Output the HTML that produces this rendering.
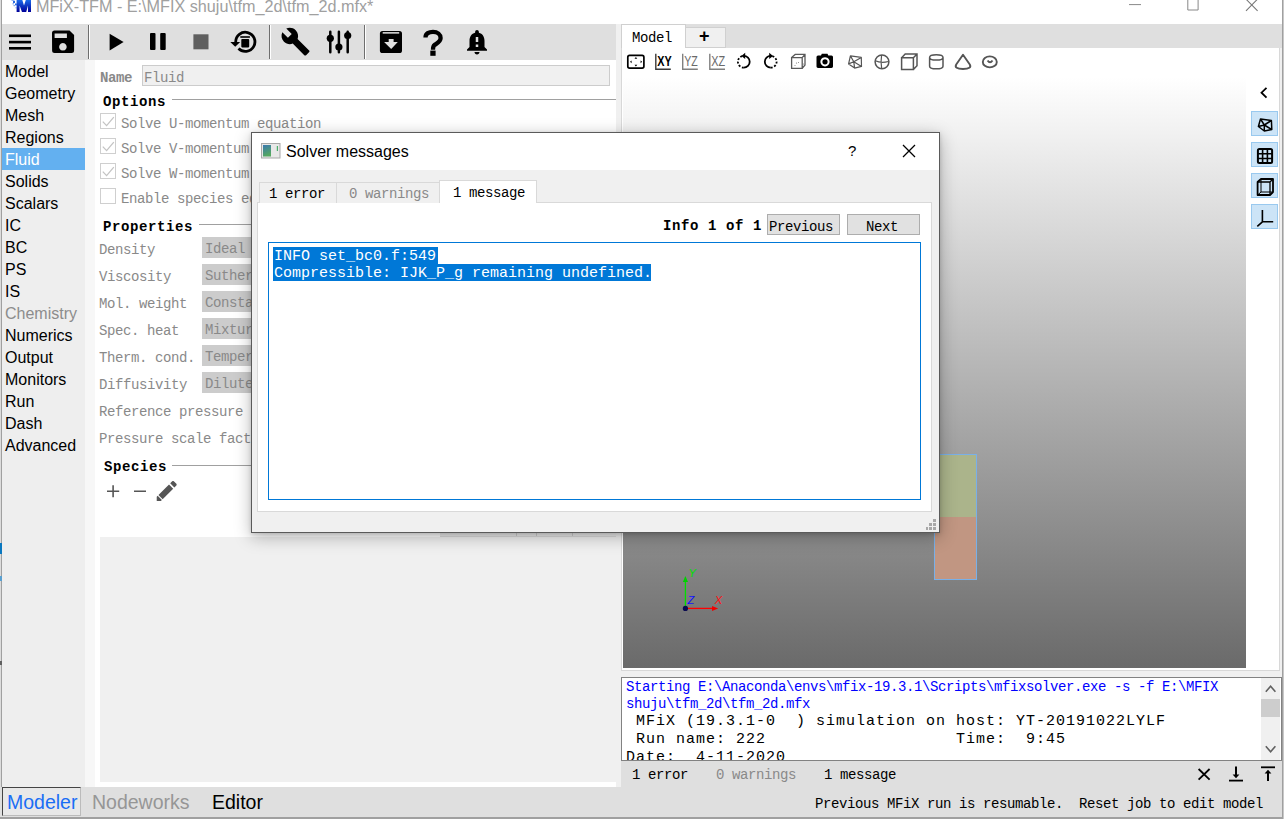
<!DOCTYPE html>
<html><head><meta charset="utf-8">
<style>
*{margin:0;padding:0;box-sizing:border-box}
html,body{width:1284px;height:819px;overflow:hidden;background:#f0f0f0;font-family:"Liberation Sans",sans-serif;position:relative}
.a{position:absolute}
.m{position:absolute;font-family:"Liberation Mono",monospace;font-size:14px;letter-spacing:-0.4px;white-space:pre;line-height:16px}
.s{position:absolute;font-family:"Liberation Sans",sans-serif;white-space:pre}
.b{font-weight:bold}
.nav{position:absolute;left:5px;margin-top:1px;font-size:16px;line-height:22px;color:#000;font-family:"Liberation Sans",sans-serif}
.lbl{color:#898989}
.cb{position:absolute;left:100px;width:16px;height:16px;border:1px solid #cfcfcf;background:#fff}
.combo{position:absolute;left:202px;width:60px;height:21px;background:#cccccc}
.vb{position:absolute;left:1251px;width:27px;height:25px;background:#cce4f7;border:1px solid #99c9ef}
</style></head><body>
<!-- title bar -->
<div class="a" style="left:0;top:0;width:1284px;height:24px;background:#fff"></div>
<div class="a" style="left:0;top:0;width:1px;height:819px;background:#dcdcdc"></div><div class="a" style="left:1px;top:0;width:1px;height:819px;background:#a0a0a0"></div><div class="a" style="left:0;top:543px;width:2px;height:11px;background:#0a78c0"></div><div class="a" style="left:0;top:576px;width:2px;height:5px;background:#5aa0d0"></div><div class="a" style="left:0;top:661px;width:2px;height:4px;background:#606060"></div>
<div class="s" style="left:36px;top:-6px;font-size:16.2px;line-height:24px;color:#a0a0a0">MFiX-TFM - E:\MFIX shuju\tfm_2d\tfm_2d.mfx*</div>
<svg class="a" style="left:0;top:0" width="34" height="14" viewBox="0 0 34 14"><defs><linearGradient id="mg" x1="0" y1="0" x2="0" y2="1"><stop offset="0" stop-color="#1a6ae8"/><stop offset="1" stop-color="#00009a"/></linearGradient></defs><path d="M16.6 0H22.3L24 5.5L25.8 0H31V11.9H28V5.5L26.2 11.9H22L19.6 5.5V11.9H16.6Z" fill="url(#mg)"/><g fill="#2a6ae0"><rect x="11.5" y="0" width="3" height="1" opacity="0.5"/><rect x="13" y="1" width="2" height="2"/><rect x="15" y="3.5" width="2" height="1.8"/><rect x="12.5" y="3" width="1.5" height="1.5" opacity="0.5"/><rect x="13.5" y="5" width="1.5" height="1.2" opacity="0.6"/><rect x="15.5" y="7" width="1.2" height="1.5" opacity="0.5"/></g></svg>
<svg class="a" style="left:1120px;top:0" width="164" height="14" viewBox="1120 0 164 14"><path d="M1129 4.6H1141" stroke="#888" stroke-width="1"/><path d="M1187.8 -1V10H1198.1V-1" stroke="#888" fill="none" stroke-width="1"/><path d="M1246.5 -0.3L1257.6 10.8M1257 -0.3L1246 10.8" stroke="#777" stroke-width="1.1"/></svg>

<!-- toolbar -->
<div class="a" style="left:2px;top:24px;width:614px;height:36px;background:#dfdfdf"></div>
<div class="a" style="left:88px;top:25px;width:1px;height:34px;background:#6e6e6e"></div><div class="a" style="left:89px;top:25px;width:1px;height:34px;background:#fff"></div>
<div class="a" style="left:269px;top:25px;width:1px;height:34px;background:#6e6e6e"></div><div class="a" style="left:270px;top:25px;width:1px;height:34px;background:#fff"></div>
<div class="a" style="left:364px;top:25px;width:1px;height:34px;background:#6e6e6e"></div><div class="a" style="left:365px;top:25px;width:1px;height:34px;background:#fff"></div>
<svg class="a" style="left:0;top:0" width="620" height="60" viewBox="0 0 620 60">
<g fill="#000">
<rect x="9" y="34.5" width="22" height="2.6"/><rect x="9" y="40.8" width="22" height="2.6"/><rect x="9" y="47" width="22" height="2.6"/>
<path fill-rule="evenodd" d="M52 33a2.5 2.5 0 0 1 2.5-2.5h15l4.6 4.6v15.5a2.5 2.5 0 0 1-2.5 2.5h-17a2.5 2.5 0 0 1-2.5-2.5zM54.6 33.6v4.5h12.3v-4.5zM62.9 43a3.8 3.8 0 1 0 0.01 0z"/>
<path d="M109.6 33.7L123.6 42L109.6 50.4z"/>
<rect x="150" y="33" width="5.5" height="17" rx="1"/><rect x="160.2" y="33" width="5.5" height="17" rx="1"/>
<rect x="193.4" y="34.3" width="15.1" height="15" fill="#5f5f5f"/>
<path d="M235.7 42A9.6 9.6 0 1 1 238.5 48.6" fill="none" stroke="#000" stroke-width="2.8"/>
<path d="M230.3 42H240.2L235.2 46.8z"/>
<rect x="240.3" y="36.2" width="9.6" height="1.6"/><rect x="241.3" y="39" width="7.9" height="8.4" rx="0.8"/>
<path transform="translate(280.3 26.35) scale(1.27)" d="M22.7 19l-9.1-9.1c.9-2.3.4-5-1.5-6.9-2-2-5-2.4-7.4-1.3L9 6 6 9 1.6 4.7C.4 7.1.9 10.1 2.9 12.1c1.9 1.9 4.6 2.4 6.9 1.5l9.1 9.1c.4.4 1 .4 1.4 0l2.3-2.3c.5-.4.5-1.1.1-1.4z"/>
<g stroke="#000" stroke-width="2.5" stroke-linecap="round"><path d="M330.3 31.8V52.2M338.9 31.8V52.2M347.7 31.8V52.2"/></g>
<circle cx="330.3" cy="38.3" r="3.6"/><circle cx="338.9" cy="47" r="3.6"/><circle cx="347.7" cy="35.5" r="3.6"/>
<rect x="379.9" y="30.9" width="22.1" height="22.1" rx="2.6"/>
<rect x="382.7" y="32" width="16.5" height="1.7" fill="#c8c8c8"/>
<path d="M388.7 39H393.6V42.1H397.8L391.2 49.1L384.1 42.1H388.7z" fill="#dfdfdf"/>
<path d="M425.5 37.5C425.5 33.5 429 31.8 433 31.8C437.5 31.8 440.6 34.5 440.6 38C440.6 42 436.5 43.5 434.5 45C433.2 46 433 47 433 49.7" fill="none" stroke="#000" stroke-width="4.3"/>
<rect x="430.3" y="50.6" width="5.3" height="5.2"/>
<path transform="translate(462 26.9) scale(1.25)" d="M18 16v-5c0-3.07-1.64-5.64-4.5-6.32V4c0-.83-.67-1.5-1.5-1.5s-1.5.67-1.5 1.5v.68C7.63 5.36 6 7.92 6 11v5l-2 2v1h16v-1l-2-2zm-5 0h-2v-2h2v2zm0-4h-2V8h2v4zm-1 10c1.1 0 2-.9 2-2h-4c0 1.1.89 2 2 2z"/>
</g>
</svg>
<div class="a" style="left:616px;top:24px;width:5px;height:763px;background:#f0f0f0"></div>

<!-- nav -->
<div class="a" style="left:2px;top:60px;width:83px;height:727px;background:#eeeeee"></div>
<div class="a" style="left:85px;top:60px;width:10px;height:727px;background:#f7f7f7"></div>
<div class="a" style="left:95px;top:60px;width:521px;height:727px;background:#fff"></div>
<div class="a" style="left:2px;top:148px;width:83px;height:22px;background:#63b0f0"></div>
<div class="nav" style="top:60px">Model</div>
<div class="nav" style="top:82px">Geometry</div>
<div class="nav" style="top:104px">Mesh</div>
<div class="nav" style="top:126px">Regions</div>
<div class="nav" style="top:148px;color:#fff">Fluid</div>
<div class="nav" style="top:170px">Solids</div>
<div class="nav" style="top:192px">Scalars</div>
<div class="nav" style="top:214px">IC</div>
<div class="nav" style="top:236px">BC</div>
<div class="nav" style="top:258px">PS</div>
<div class="nav" style="top:280px">IS</div>
<div class="nav" style="top:302px;color:#8c8c8c">Chemistry</div>
<div class="nav" style="top:324px">Numerics</div>
<div class="nav" style="top:346px">Output</div>
<div class="nav" style="top:368px">Monitors</div>
<div class="nav" style="top:390px">Run</div>
<div class="nav" style="top:412px">Dash</div>
<div class="nav" style="top:434px">Advanced</div>

<!-- content -->
<div class="m b lbl" style="left:100px;top:70px">Name</div>
<div class="a" style="left:142px;top:65px;width:468px;height:21px;background:#f0f0f0;border:1px solid #cccccc"></div>
<div class="m lbl" style="left:144px;top:70px">Fluid</div>
<div class="m b" style="left:103px;top:94px;letter-spacing:0.6px">Options</div>
<div class="a" style="left:172px;top:99px;width:444px;height:1px;background:#a0a0a0"></div>
<div class="cb" style="top:113px"></div>
<div class="cb" style="top:138px"></div>
<div class="cb" style="top:163px"></div>
<div class="cb" style="top:188px"></div>
<div class="m lbl" style="left:121px;top:116px">Solve U-momentum equation</div>
<div class="m lbl" style="left:121px;top:141px">Solve V-momentum equation</div>
<div class="m lbl" style="left:121px;top:166px">Solve W-momentum equation</div>
<div class="m lbl" style="left:121px;top:191px">Enable species equations</div>
<div class="m b" style="left:103px;top:219px;letter-spacing:0.6px">Properties</div>
<div class="a" style="left:199px;top:224px;width:417px;height:1px;background:#a0a0a0"></div>
<div class="combo" style="top:237px"></div>
<div class="combo" style="top:264px"></div>
<div class="combo" style="top:291px"></div>
<div class="combo" style="top:318px"></div>
<div class="combo" style="top:345px"></div>
<div class="combo" style="top:372px"></div>
<div class="m lbl" style="left:99px;top:242px">Density</div>
<div class="m lbl" style="left:99px;top:269px">Viscosity</div>
<div class="m lbl" style="left:99px;top:296px">Mol. weight</div>
<div class="m lbl" style="left:99px;top:323px">Spec. heat</div>
<div class="m lbl" style="left:99px;top:350px">Therm. cond.</div>
<div class="m lbl" style="left:99px;top:377px">Diffusivity</div>
<div class="m lbl" style="left:205px;top:241px">Ideal</div>
<div class="m lbl" style="left:205px;top:268px">Suther</div>
<div class="m lbl" style="left:205px;top:295px">Consta</div>
<div class="m lbl" style="left:205px;top:322px">Mixtur</div>
<div class="m lbl" style="left:205px;top:349px">Temper</div>
<div class="m lbl" style="left:205px;top:376px">Dilute</div>
<div class="m lbl" style="left:99px;top:404px">Reference pressure</div>
<div class="m lbl" style="left:99px;top:431px">Pressure scale factor</div>
<div class="m b" style="left:104px;top:459px;letter-spacing:0.6px">Species</div>
<div class="a" style="left:172px;top:465px;width:444px;height:1px;background:#a0a0a0"></div>
<svg class="a" style="left:0;top:100px" width="200" height="420" viewBox="0 100 200 420">
<g stroke="#c4c4c4" stroke-width="1.3" fill="none"><path d="M102.8 121.6L106.6 125.6L113.8 117.2M102.8 146.6L106.6 150.6L113.8 142.2M102.8 171.6L106.6 175.6L113.8 167.2"/></g>
<path d="M107 491.2H119.2M113.1 485.3V497.2M134 491.2H146" stroke="#555" stroke-width="1.6"/>
<path transform="translate(153.4 477.6) scale(1.11)" fill="#555" d="M3 17.25V21h3.75L17.81 9.94l-3.75-3.75L3 17.25zM20.71 7.04c.39-.39.39-1.02 0-1.41l-2.34-2.34c-.39-.39-1.02-.39-1.41 0l-1.83 1.83 3.75 3.75 1.83-1.83z"/><path transform="translate(153.4 477.6) scale(1.11)" d="M3.3 15.1L8.9 20.7" stroke="#fff" stroke-width="1"/>
</svg>
<div class="a" style="left:440px;top:515px;width:176px;height:22px;background:#ededed;border-bottom:1px solid #dcdcdc"></div><div class="a" style="left:516px;top:515px;width:1px;height:21px;background:#cfcfcf"></div><div class="a" style="left:536px;top:515px;width:1px;height:21px;background:#cfcfcf"></div><div class="a" style="left:572px;top:515px;width:1px;height:21px;background:#cfcfcf"></div>
<div class="a" style="left:100px;top:537px;width:516px;height:245px;background:#f0f0f0"></div>

<!-- right panel -->
<div class="a" style="left:621px;top:24px;width:661px;height:24px;background:#dfdfdf"></div>
<div class="a" style="left:621px;top:24px;width:65px;height:24px;background:#fff;border:1px solid #d0d0d0;border-bottom:none"></div>
<div class="a" style="left:686px;top:27px;width:40px;height:21px;background:#f0f0f0;border:1px solid #d0d0d0;border-left:none"></div>
<div class="m" style="left:632px;top:30px">Model</div>
<div class="s b" style="left:699px;top:26px;font-size:18px;line-height:20px">+</div>
<div class="a" style="left:621px;top:48px;width:659px;height:623px;background:#fff;border-left:1px solid #d8d8d8;border-right:1px solid #d8d8d8;border-bottom:1px solid #d8d8d8"></div>
<div class="a" style="left:623px;top:77px;width:623px;height:591px;background:linear-gradient(#ffffff,#6a6a6a)"></div>
<div class="a" style="left:934px;top:454px;width:43px;height:126px;border:1px solid #79b0e8"></div>
<div class="a" style="left:935px;top:455px;width:41px;height:62px;background:#abb48b"></div>
<div class="a" style="left:935px;top:517px;width:41px;height:62px;background:#c19682"></div>
<svg class="a" style="left:660px;top:560px" width="80" height="60" viewBox="660 560 80 60">
<path d="M685.4 608.4V581" stroke="#00e000" stroke-width="1.3"/>
<path d="M682.8 582L685.4 576L688 582z" fill="#00d000"/>
<path d="M685.4 608.4H712.5" stroke="#ff0000" stroke-width="1.3"/>
<path d="M712 605.9L718.2 608.4L712 610.9z" fill="#f00000"/>
<circle cx="685.4" cy="608.4" r="2.6" fill="#0a0a50"/>
<text x="688.6" y="577" font-family="Liberation Sans" font-style="italic" font-size="11.2" fill="#00e000">Y</text>
<text x="687.6" y="604.2" font-family="Liberation Sans" font-style="italic" font-size="11.2" fill="#1010ff">Z</text>
<text x="714.8" y="604.2" font-family="Liberation Sans" font-style="italic" font-size="11.2" fill="#ff1010">X</text>
</svg>
<div class="vb" style="top:111px"></div>
<div class="vb" style="top:142px"></div>
<div class="vb" style="top:173px"></div>
<div class="vb" style="top:204px"></div>

<svg class="a" style="left:0;top:0" width="1284" height="240" viewBox="0 0 1284 240">
<g fill="none" stroke="#000" stroke-width="1.7">
<rect x="627.8" y="55.4" width="16.1" height="12.7" rx="1.8"/>
</g>
<g fill="#000"><path d="M635.9 57l1.4 1.8h-2.8zM635.9 66.6l1.4-1.8h-2.8zM630 61.8l1.6-1.4v2.8zM642.2 61.8l-1.6-1.4v2.8z"/></g>
<path d="M655.8 53.8V69.3H670.8" fill="none" stroke="#3a3a3a" stroke-width="1.4"/>
<text x="657.3" y="66.2" font-family="Liberation Sans" font-size="13.8" font-weight="bold" textLength="14.4" lengthAdjust="spacingAndGlyphs" fill="#000">XY</text>
<path d="M682.7 53.8V69.3H697.8" fill="none" stroke="#808080" stroke-width="1.4"/>
<text x="684.2" y="66.2" font-family="Liberation Sans" font-size="13.8" textLength="13.6" lengthAdjust="spacingAndGlyphs" fill="#6a6a6a">YZ</text>
<path d="M709.8 53.8V69.3H725" fill="none" stroke="#808080" stroke-width="1.4"/>
<text x="711.2" y="66.2" font-family="Liberation Sans" font-size="13.8" textLength="13.9" lengthAdjust="spacingAndGlyphs" fill="#6a6a6a">XZ</text>
<g fill="none" stroke="#000" stroke-width="1.8">
<path d="M743.8 55.9A5.9 5.9 0 0 1 743.8 67.7"/>
<path d="M743.8 67.7A5.9 5.9 0 0 1 743.8 55.9" stroke-dasharray="2 1.6"/>
<path d="M770.7 55.9A5.9 5.9 0 0 0 770.7 67.7"/>
<path d="M770.7 67.7A5.9 5.9 0 0 0 770.7 55.9" stroke-dasharray="2 1.6"/>
</g>
<path d="M741.4 55.9L745.2 52.8V59z M773 55.9L769.2 52.8V59z" fill="#000"/>
<g fill="none" stroke="#5a5a5a" stroke-width="1.3">
<path d="M791.6 57.6H802.2V68.3H791.6z M791.6 57.6L795.2 54.4H805V65L802.2 68.3 M802.2 57.6L805 54.4"/>
</g>
<g fill="#777"><circle cx="796.5" cy="63" r="0.6"/><circle cx="798.5" cy="62.5" r="0.5"/><circle cx="795" cy="65.5" r="0.5"/><circle cx="803.5" cy="64" r="0.5"/></g>
<path fill-rule="evenodd" fill="#000" d="M818 55.5H821L821.8 53.8H827.5L828.3 55.5H831.5Q833 55.5 833 57V66.6Q833 68 831.5 68H818Q816.5 68 816.5 66.6V57Q816.5 55.5 818 55.5z M825 57.2A4.6 4.6 0 1 0 825.01 57.2z"/>
<circle cx="825" cy="61.8" r="2.6" fill="#000"/>
<g fill="none" stroke="#555" stroke-width="1.2" stroke-linejoin="round">
<path d="M850.4 55.9L861.3 57.4L861.5 66.4L854.6 68.1L848.6 63.9Z M853.8 61.8L850.4 55.9 M853.8 61.8L861.3 57.4 M853.8 61.8L861.5 66.4 M853.8 61.8L854.6 68.1 M853.8 61.8L848.6 63.9"/>
</g>
<g fill="none" stroke="#555" stroke-width="1.5">
<circle cx="882" cy="61.8" r="6.9"/>
<path d="M881.6 55Q880.5 62 881.7 68.6 M875.3 60.8Q881 63.5 888.5 61.5" stroke-width="1.2"/>
<path d="M901.6 57.8H913.4V69.5H901.6z M901.6 57.8L905.2 54.1H917V65.8L913.4 69.5 M913.4 57.8L917 54.1"/>
<path d="M929.6 57.4Q929.6 54.8 936.3 54.8Q943 54.8 943 57.4V66.2Q943 68.8 936.3 68.8Q929.6 68.8 929.6 66.2Z M929.6 57.4Q929.6 60 936.3 60Q943 60 943 57.4"/>
</g>
<g fill="none" stroke="#555" stroke-width="1.9" stroke-linejoin="round">
<path d="M963 54.8L956.2 64.5Q953.8 68.9 963 69Q972.3 68.9 969.8 64.5Z"/>
<ellipse cx="989.8" cy="61.9" rx="7" ry="5.5"/>
<path d="M987.6 60.4Q990 64.2 992.5 60.4"/>
</g>
<path d="M1266.5 87.8L1261.5 92.7L1266.5 97.6" fill="none" stroke="#000" stroke-width="1.8"/>
<g fill="none" stroke="#000" stroke-width="1.5" stroke-linejoin="round">
<path d="M1260.5 119L1271.4 120.5L1271.8 129.6L1264.3 131L1258.4 126.5Z M1264.3 125L1260.5 119 M1264.3 125L1271.4 120.5 M1264.3 125L1271.8 129.6 M1264.3 125L1264.3 131 M1264.3 125L1258.4 126.5"/>
</g>
<g fill="none" stroke="#000" stroke-width="2">
<rect x="1257.9" y="149.1" width="14.2" height="14" rx="1.5"/>
<path d="M1262.6 149.1V163.1M1267.4 149.1V163.1M1257.9 153.8H1272.1M1257.9 158.5H1272.1" stroke-width="1.6"/>
</g>
<g fill="none" stroke="#000" stroke-width="1.8" stroke-linejoin="round">
<path d="M1257.6 182L1261 179H1273V192L1270 195H1257.6Z"/>
<path d="M1257.6 182H1270V195 M1270 182L1273 179" stroke-width="1.3"/>
<path d="M1261 179V192H1273 M1261 192L1257.6 195" stroke-width="1"/>
</g>
<path d="M1262.4 210V221.8H1273.2 M1262.4 221.8L1257.3 226.3" fill="none" stroke="#000" stroke-width="1.6"/>
</svg>
<!-- console -->
<div class="a" style="left:621px;top:677px;width:661px;height:84px;background:#fff;border:1px solid #828282"></div>
<div class="a" style="left:621px;top:761px;width:661px;height:26px;background:#dfdfdf"></div>
<div class="a" style="left:0;top:787px;width:1284px;height:30px;background:#dfdfdf"></div>
<div class="a" style="left:0;top:817px;width:1284px;height:2px;background:#a0a0a0"></div>
<div class="m" style="left:626px;top:679px;color:#0000ff;line-height:17px">Starting E:\Anaconda\envs\mfix-19.3.1\Scripts\mfixsolver.exe -s -f E:\MFIX
shuju\tfm_2d\tfm_2d.mfx</div>
<div class="a" style="left:622px;top:712px;width:639px;height:48px;overflow:hidden"><div class="m" style="left:4px;top:1.25px;line-height:18px;font-size:15px;letter-spacing:1px"> MFiX (19.3.1-0  ) simulation on host: YT-20191022LYLF
 Run name: 222                   Time:  9:45
Date:  4-11-2020</div></div>
<div class="a" style="left:1261px;top:678px;width:19px;height:82px;background:#f0f0f0"></div>
<div class="a" style="left:1261px;top:699px;width:19px;height:18px;background:#cdcdcd"></div>
<svg class="a" style="left:1190px;top:680px" width="94" height="105" viewBox="1190 680 94 105">
<path d="M1265.8 691.8L1270.6 686.2L1275.4 691.8M1265.8 746.2L1270.6 751.8L1275.4 746.2" fill="none" stroke="#606060" stroke-width="1.6"/>
<path d="M1198.6 769L1209.6 779.6M1209.6 769L1198.6 779.6" stroke="#000" stroke-width="1.8"/>
<path d="M1236 766.5V776" stroke="#000" stroke-width="2"/><path d="M1232.6 774.5H1239.4L1236 778.2z" fill="#000"/>
<path d="M1229 780.6H1243" stroke="#000" stroke-width="1.8"/>
<path d="M1261 767.3H1275" stroke="#000" stroke-width="1.8"/>
<path d="M1268 772V781" stroke="#000" stroke-width="2"/><path d="M1264.6 773.6H1271.4L1268 769.8z" fill="#000"/>
</svg>
<div class="m" style="left:632px;top:767px">1 error</div>
<div class="m lbl" style="left:716px;top:767px">0 warnings</div>
<div class="m" style="left:824px;top:767px">1 message</div>
<div class="m" style="left:815px;top:796px">Previous MFiX run is resumable.  Reset job to edit model</div>
<div class="a" style="left:2px;top:787px;width:79px;height:29px;background:#e8e8e8;border-top:1px solid #444;border-left:1px solid #444;border-right:1px solid #bbb;border-bottom:1px solid #bbb"></div>
<div class="s" style="left:7px;top:790px;font-size:19.5px;line-height:24px;color:#1a6ef5">Modeler</div>
<div class="s" style="left:92px;top:790px;font-size:19.5px;line-height:24px;color:#969696">Nodeworks</div>
<div class="s" style="left:212px;top:790px;font-size:19.5px;line-height:24px;color:#000">Editor</div>

<div class="a" style="left:1282px;top:0;width:1px;height:819px;background:#a0a0a0"></div><div class="a" style="left:1283px;top:0;width:1px;height:819px;background:#c8c8c8"></div>
<!-- dialog -->
<div class="a" style="left:251px;top:132px;width:689px;height:401px;background:#f0f0f0;border:1px solid #5a5a5a;box-shadow:0 4px 16px rgba(0,0,0,0.28),0 1px 4px rgba(0,0,0,0.15)"></div>
<div class="a" style="left:252px;top:133px;width:687px;height:37px;background:#fff"></div>
<svg class="a" style="left:261px;top:143px" width="20" height="16" viewBox="0 0 20 16"><defs><linearGradient id="ig" x1="0" y1="0" x2="0.3" y2="1"><stop offset="0" stop-color="#3a78b0"/><stop offset="1" stop-color="#55a860"/></linearGradient></defs><rect x="0.5" y="0.5" width="18.5" height="14.5" fill="#e8e8e8" stroke="#a8a8a8"/><rect x="2" y="2" width="8" height="11.5" fill="url(#ig)"/><rect x="15.8" y="3" width="1.2" height="5" fill="#4cae6a"/></svg>
<svg class="a" style="left:920px;top:515px" width="20" height="16" viewBox="920 515 20 16"><g fill="#a8a8a8"><rect x="933" y="519" width="3" height="3"/><rect x="929" y="523" width="3" height="3"/><rect x="933" y="523" width="3" height="3"/><rect x="926" y="527" width="2" height="3"/><rect x="929" y="527" width="3" height="3"/><rect x="933" y="527" width="3" height="3"/></g></svg>
<div class="s" style="left:286px;top:142px;font-size:16px;line-height:20px">Solver messages</div>
<div class="s" style="left:848px;top:141px;font-size:15px;line-height:20px">?</div>
<svg class="a" style="left:902px;top:144px" width="14" height="14"><path d="M1 1l12 12M13 1L1 13" stroke="#000" stroke-width="1.3"/></svg>
<div class="a" style="left:257px;top:202px;width:675px;height:310px;background:#fff;border:1px solid #d9d9d9"></div>
<div class="a" style="left:259px;top:182px;width:78px;height:21px;background:#f0f0f0;border:1px solid #d9d9d9;border-bottom:none"></div>
<div class="a" style="left:336px;top:182px;width:104px;height:21px;background:#f0f0f0;border:1px solid #d9d9d9;border-bottom:none"></div>
<div class="a" style="left:439px;top:180px;width:98px;height:23px;background:#fff;border:1px solid #d9d9d9;border-bottom:none"></div>
<div class="m" style="left:269px;top:186px">1 error</div>
<div class="m lbl" style="left:349px;top:186px">0 warnings</div>
<div class="m" style="left:453px;top:185px">1 message</div>
<div class="m b" style="left:663px;top:218px;letter-spacing:0.6px">Info 1 of 1</div>
<div class="a" style="left:767px;top:214px;width:73px;height:21px;background:#e1e1e1;border:1px solid #adadad"></div>
<div class="a" style="left:847px;top:214px;width:73px;height:21px;background:#e1e1e1;border:1px solid #adadad"></div>
<div class="m" style="left:769px;top:219px">Previous</div>
<div class="m" style="left:866px;top:219px">Next</div>
<div class="a" style="left:268px;top:242px;width:653px;height:258px;background:#fff;border:1px solid #0078d7"></div>
<div class="a" style="left:273px;top:247px;width:165px;height:17px;background:#0078d7"></div>
<div class="a" style="left:273px;top:264px;width:378px;height:17px;background:#0078d7"></div>
<div class="m" style="left:274px;top:248px;color:#fff;font-size:15px;line-height:17px;letter-spacing:0">INFO set_bc0.f:549
Compressible: IJK_P_g remaining undefined.</div>
</body></html>
